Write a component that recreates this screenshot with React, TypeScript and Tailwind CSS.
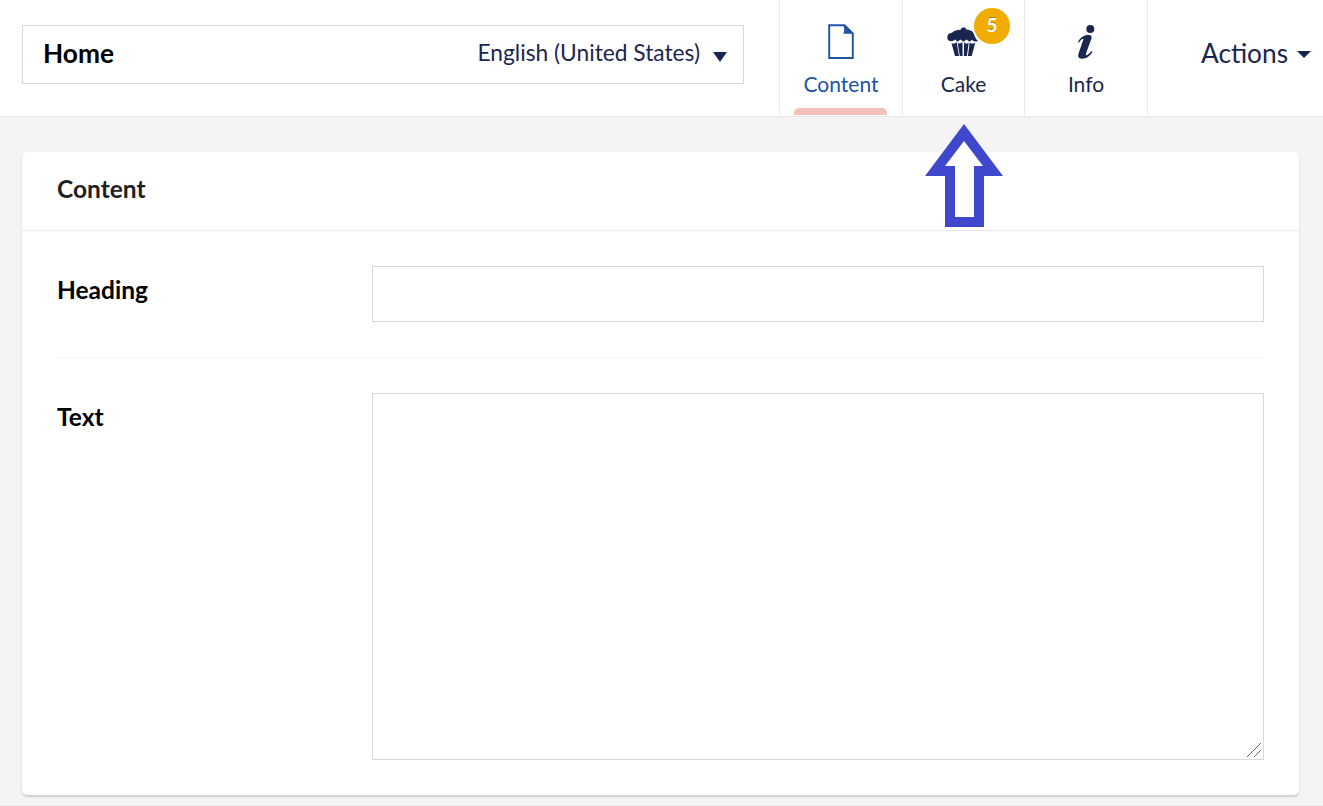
import type { ReactNode } from "react";

function DocumentIcon() {
  return (
    <svg width="26" height="36" viewBox="0 0 26 36" fill="none">
      <path d="M1.200 1.200H16.500L24.800 9.500V34H1.200Z" stroke="currentColor" strokeWidth="1.900" />
      <path d="M15.300 1H17.500L25 9.800H15.300C16.500 7 16.500 4 15.300 1Z" fill="currentColor" />
    </svg>
  );
}

function CupcakeIcon() {
  return (
    <svg className="mr-[2px]" width="31" height="30" viewBox="0 0 31 30" fill="currentColor">
      <path d="M.7 12.500C-.5 9 1 6 5 5.700C7.500 3.500 10 2.700 13.500 2.700C14.300 1.200 15 .6 16.500 .6C18 .6 19 1.200 19.700 2.700C24 2.700 27 5 27.300 8.500C28.200 10 29 12.500 31 14C28.500 15 26 14.500 25 12.800L22.500 14.800L19.500 12.500L16.500 14.800L13.500 12.500L10.500 14.800L8 12.500C6.500 14.500 2 15 .7 12.500Z" />
      <path d="M4.500 16.300L7 16.700L9.700 15.300L12 29H8Z" />
      <path d="M10.700 16L13 16.500L15.500 15.300L15.600 29H12.800Z" />
      <path d="M17.100 15.300L19.300 16.700L21.700 16L19.900 29H16.900Z" />
      <path d="M22.700 15.500L25 16.700L28.200 16L24.700 29H20.900Z" />
    </svg>
  );
}

function InfoIcon() {
  return (
    <svg className="mr-[1px]" width="18" height="34" viewBox="0 0 18 34" fill="currentColor">
      <circle cx="13.300" cy="4" r="4" />
      <path d="M.8 17C4 12 7 10 11 10C14.500 10 15.300 11 14.300 14L9 28.500C8.500 31 10 31 14.500 26L15.500 27C12 32 9 33.700 5 33.700C1.200 33.700 .7 31 1.700 28L6.200 15C7 13 5 13 2 17.500Z" />
    </svg>
  );
}

function Caret({ className }: { className: string }) {
  return (
    <svg className={className} viewBox="0 0 14 10" preserveAspectRatio="none" fill="currentColor">
      <path d="M0 0H14L7 10Z" />
    </svg>
  );
}

interface TabProps {
  label: string;
  icon: ReactNode;
  active?: boolean;
  badge?: string;
  className: string;
}

function Tab({ label, icon, active = false, badge, className }: TabProps) {
  return (
    <button
      className={`relative flex h-[115px] shrink-0 flex-col items-center border-l border-[#e9e9eb] pt-6 ${className} ${active ? "text-[#2152a3]" : "text-[#1b264f]"}`}
    >
      <span className="flex h-9 items-center">{icon}</span>
      <span className="mt-[11px] text-[21px] leading-[26px]">{label}</span>
      {active && <span className="absolute bottom-0 left-[14px] h-[7px] w-[93px] rounded-t-[5px] bg-[#f5c1bc]" />}
      {badge && (
        <span className="absolute left-[71px] top-2 flex size-9 items-center justify-center rounded-full bg-[#f0ac00] pb-[3px] text-[19px] font-bold leading-none text-white [text-shadow:0_-1px_0_rgba(0,0,0,0.3)]">
          {badge}
        </span>
      )}
    </button>
  );
}

export default function App() {
  return (
    <div className="relative flex h-[806px] w-[1323px] flex-col overflow-hidden bg-[#f5f3f4] font-['Lato',sans-serif]">
      <header className="flex h-[117px] shrink-0 border-b border-[#e9e9eb] bg-white">
        <div className="ml-[22px] mt-[25px] flex h-[59px] w-[722px] justify-between border border-[#d8d7d9] pl-5 pr-4">
          <span className="mt-[11px] text-[26.25px] font-bold leading-8 text-black">Home</span>
          <div className="mt-[11px] flex text-[#1b264f]">
            <span className="text-[22.75px] leading-8">English (United States)</span>
            <Caret className="ml-[13px] mt-[15px] h-[10px] w-[14px]" />
          </div>
        </div>
        <nav className="ml-[35px] flex">
          <Tab label="Content" icon={<DocumentIcon />} active className="w-[123px]" />
          <Tab label="Cake" icon={<CupcakeIcon />} badge="5" className="w-[122px]" />
          <Tab label="Info" icon={<InfoIcon />} className="w-[123px]" />
        </nav>
        <button className="flex h-[115px] flex-1 border-l border-[#e9e9eb] pl-[53px] pt-[37px] text-[#1b264f]">
          <span className="text-[26.25px] leading-8">Actions</span>
          <Caret className="ml-[9px] mt-[14px] h-[7px] w-[14px]" />
        </button>
      </header>

      <main className="flex-1 border-b border-[#e9e9eb] pl-[22px] pt-[35px]">
        <section className="h-[643px] w-[1277px] rounded-[5px] bg-white shadow-[0_2px_2px_rgba(0,0,0,0.16)]">
          <div className="h-[79px] border-b border-[#e9e9eb] pl-[35px] pt-[21px]">
            <h2 className="text-[24.5px] font-bold leading-8 text-[#1f1f1f]">Content</h2>
          </div>
          <div className="px-[35px]">
            <div className="flex h-[127px] border-b border-[#f6f4f5] pt-[35px]">
              <label htmlFor="heading" className="w-[315px] pt-[8px] text-[24.5px] font-bold leading-8 text-black">Heading</label>
              <input id="heading" className="h-14 w-[892px] border border-[#d8d7d9] bg-white px-2 text-2xl outline-none" />
            </div>
            <div className="flex pt-[35px]">
              <label htmlFor="text" className="w-[315px] pt-[8px] text-[24.5px] font-bold leading-8 text-black">Text</label>
              <div className="flex h-[367px] w-[892px] border border-[#d8d7d9]">
                <textarea id="text" className="h-full min-w-0 flex-1 resize-none px-2 text-2xl outline-none" />
                <svg className="-ml-4 mb-[2px] mr-[2px] size-[14px] shrink-0 self-end" viewBox="0 0 14 14" stroke="#666" strokeWidth="1" fill="none">
                  <path d="M0 14L14 0M7 14L14 7" />
                </svg>
              </div>
            </div>
          </div>
        </section>
      </main>

      <svg className="absolute left-[925px] top-[124px]" width="78" height="103" viewBox="0 0 78 103">
        <path d="M39 0L78 52H59V103H20V52H0Z" fill="#3f48cc" />
        <path d="M39 17L58 42H49V93H30V42H20Z" fill="#fff" />
      </svg>
    </div>
  );
}
